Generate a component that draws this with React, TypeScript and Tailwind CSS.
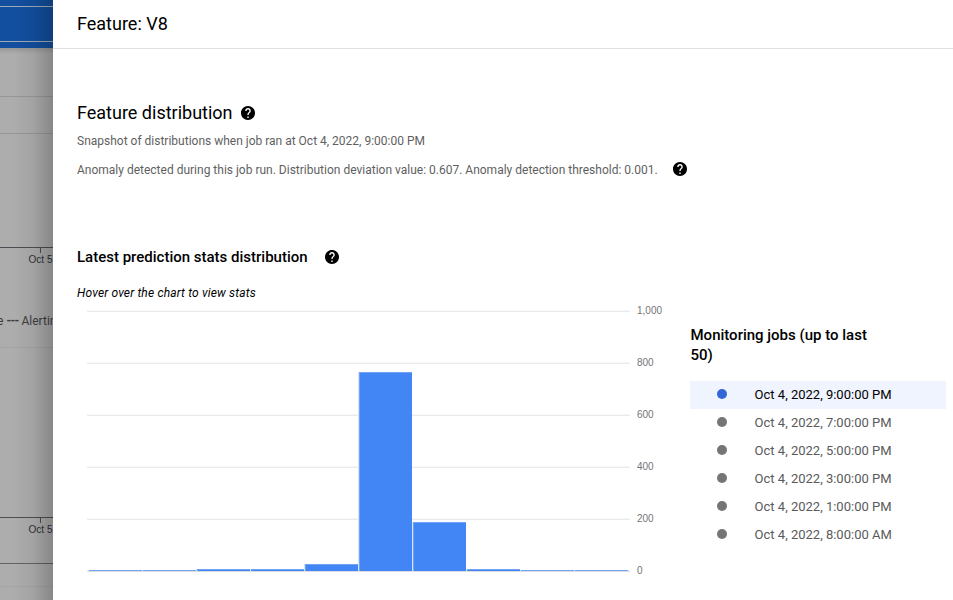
import React from "react";

const jobs = [
  "Oct 4, 2022, 9:00:00 PM",
  "Oct 4, 2022, 7:00:00 PM",
  "Oct 4, 2022, 5:00:00 PM",
  "Oct 4, 2022, 3:00:00 PM",
  "Oct 4, 2022, 1:00:00 PM",
  "Oct 4, 2022, 8:00:00 AM",
];

const ticks = ["1,000", "800", "600", "400", "200", "0"];

// Bar heights in pixels, one per bucket.
const bars = [1, 1, 2, 2, 7, 199, 49, 2, 1, 1];

function HelpIcon({ className = "" }: { className?: string }) {
  return (
    <svg viewBox="2 2 20 20" className={"h-[14px] w-[14px] shrink-0 " + className} fill="#000">
      <path d="M12 2C6.48 2 2 6.48 2 12s4.48 10 10 10 10-4.48 10-10S17.52 2 12 2zm1 17h-2v-2h2v2zm2.07-7.75l-.9.92C13.45 12.9 13 13.5 13 15h-2v-.5c0-1.1.45-2.1 1.17-2.83l1.24-1.26c.37-.36.59-.86.59-1.41 0-1.1-.9-2-2-2s-2 .9-2 2H8c0-2.21 1.79-4 4-4s4 1.79 4 4c0 .88-.36 1.68-.93 2.25z" />
    </svg>
  );
}

function Axis() {
  return (
    <div className="h-[26px] border-t border-[#4b4e52]">
      <div className="ml-10 h-[5px] w-px bg-[#4b4e52]" />
      <div className="ml-[28.6px] whitespace-nowrap font-['Liberation_Sans',sans-serif] text-[10px] leading-[14px] text-[#303133]">
        Oct 5
      </div>
    </div>
  );
}

function Backdrop() {
  return (
    <div className="relative h-[600px] w-[53px] shrink-0 overflow-hidden bg-[#adadad]">
      <div className="flex h-12 flex-col bg-[#124f9f]">
        <div className="mt-[6px] h-px bg-[#9eabb9]" />
        <div className="mt-[34px] h-px bg-[#9eabb9]" />
      </div>
      <div className="h-[48px] bg-linear-to-b from-[#999] from-0% to-[#adadad] to-[6px]" />
      <div className="h-[37px] border-t border-[#989898]" />
      <div className="h-[114px] border-t border-[#989898]" />
      <Axis />
      <div className="mt-[40px] flex h-4 whitespace-nowrap font-[Roboto,sans-serif] text-[12px] leading-4 text-[#3c3d3e]">
        <span className="-ml-[3px] w-[9.5px] shrink-0">e</span>
        <span className="w-[15px] shrink-0 font-bold tracking-[-0.7px]">---</span>
        <span className="shrink-0">Alerting</span>
      </div>
      <div className="mt-[18px] h-[170px] border-t border-[#a2a2a2]" />
      <Axis />
      <div className="mt-[20px] h-[23px] border-t border-[#636363]" />
      <div className="border-t border-[#a5a5a5]" />
      <div className="absolute inset-y-0 right-0 w-10 bg-linear-to-r from-black/0 via-black/6 to-black/22" />
    </div>
  );
}

function Chart() {
  return (
    <div className="flex h-[280px] w-[600px]">
      <svg className="ml-[10px] h-[280px] w-[544px] shrink-0" viewBox="0 0 544 280" shapeRendering="crispEdges">
        {ticks.map((t, i) => (
          <rect key={t} x="0" y={8 + i * 52} width="543" height="1" fill={i === 5 ? "#d9dce0" : "#ebebeb"} />
        ))}
        {ticks.map((t, i) => (
          <rect key={"s" + t} x="0" y={7 + i * 52} width="543" height="1" fill="#f8f8f8" />
        ))}
        {bars.map((h, i) => (
          <g key={i}>
            <rect x={1 + i * 54} y={268 - h} width="54" height={h} fill="#d5e2f8" />
            <rect x={2 + i * 54} y={268 - h} width="53" height={h} fill="#72a3f7" />
            {h > 1 && <rect x={3 + i * 54} y={269 - h} width="52" height={h - 1} fill="#4285f4" />}
          </g>
        ))}
      </svg>
      <div className="ml-[6px] flex flex-col font-['Liberation_Sans',sans-serif] text-[10px] leading-[52px] text-[#757575]">
        <div className="-mt-[18px]">
          {ticks.map((t) => (
            <div key={t} className="h-[52px]">{t}</div>
          ))}
        </div>
      </div>
    </div>
  );
}

export default function App() {
  return (
    <div className="flex h-[600px] w-[953px] overflow-hidden bg-white font-[Roboto,sans-serif] text-black">
      <Backdrop />
      <main className="flex w-[900px] flex-col">
        <header className="h-[49px] border-b border-[#e0e0e0] pl-6 text-[18px] leading-[48px]">Feature: V8</header>
        <section className="pl-6">
          <h1 className="mt-[52px] flex h-6 items-center text-[18px] leading-6">
            <span className="w-[156px] whitespace-nowrap">Feature distribution</span>
            <HelpIcon className="ml-2" />
          </h1>
          <p className="mt-2 h-4 text-[12px] leading-4 text-[#5f5f5f]">
            Snapshot of distributions when job ran at Oct 4, 2022, 9:00:00 PM
          </p>
          <div className="mt-[12px] flex h-4 items-center text-[12px] leading-4 text-[#5f5f5f]">
            <span className="w-[580px] whitespace-nowrap pt-px">Anomaly detected during this job run. Distribution deviation value: 0.607. Anomaly detection threshold: 0.001.</span>
            <HelpIcon className="ml-4" />
          </div>
          <h2 className="mt-[70px] flex h-5 items-center text-[15px] font-medium leading-5">
            <span>Latest prediction stats distribution</span>
            <HelpIcon className="ml-[17px]" />
          </h2>
          <p className="mt-[18px] h-4 text-[12px] italic leading-4 tracking-[0.16px]">Hover over the chart to view stats</p>
          <div className="mt-[2px] flex">
            <Chart />
            <aside className="ml-[13px] w-[256px]">
              <h3 className="mt-[22px] w-[200px] pl-[0.5px] text-[15px] font-medium leading-5">Monitoring jobs (up to last 50)</h3>
              <ul className="mt-[16px]">
                {jobs.map((job, i) => (
                  <li
                    key={job}
                    className={
                      "flex h-7 items-center pl-[27px] text-[13px] " +
                      (i === 0 ? "bg-[#f0f4fe] text-black" : "text-[#5a5a5a]")
                    }
                  >
                    <span className={"mb-[2px] h-[10px] w-[10px] rounded-full " + (i === 0 ? "bg-[#3367d6]" : "bg-[#757575]")} />
                    <span className="ml-[27.6px]">{job}</span>
                  </li>
                ))}
              </ul>
            </aside>
          </div>
        </section>
      </main>
    </div>
  );
}
